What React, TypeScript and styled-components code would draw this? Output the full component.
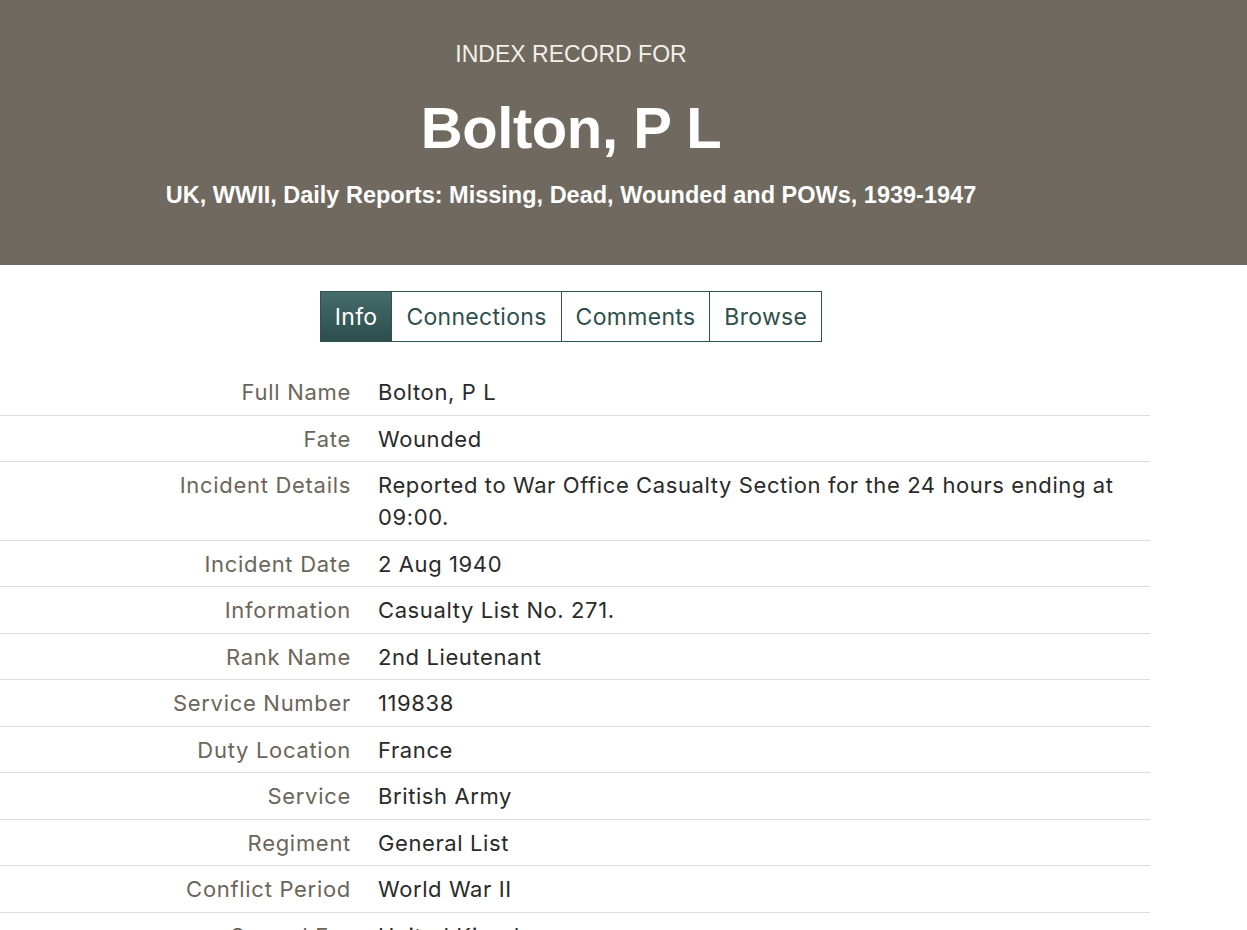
import styled, { createGlobalStyle } from 'styled-components'

const GlobalStyle = createGlobalStyle`
  html, body {
    margin: 0;
    padding: 0;
    background: #fff;
  }
  body {
    font-family: Inter, "Noto Sans", sans-serif;
  }
`

const tabs = ['Info', 'Connections', 'Comments', 'Browse']

const fields: [string, string][] = [
  ['Full Name', 'Bolton, P L'],
  ['Fate', 'Wounded'],
  ['Incident Details', 'Reported to War Office Casualty Section for the 24 hours ending at 09:00.'],
  ['Incident Date', '2 Aug 1940'],
  ['Information', 'Casualty List No. 271.'],
  ['Rank Name', '2nd Lieutenant'],
  ['Service Number', '119838'],
  ['Duty Location', 'France'],
  ['Service', 'British Army'],
  ['Regiment', 'General List'],
  ['Conflict Period', 'World War II'],
  ['Served For', 'United Kingdom']
]

export default function App () {
  return (
    <Page>
      <GlobalStyle />
      <Header>
        <HeaderInner>
          <OverTitle>INDEX RECORD FOR</OverTitle>
          <Title>Bolton, P L</Title>
          <Collection>UK, WWII, Daily Reports: Missing, Dead, Wounded and POWs, 1939-1947</Collection>
        </HeaderInner>
      </Header>
      <Main>
        <TabBar>
          {tabs.map((t, i) => (
            <Tab key={t} active={i === 0}>{t}</Tab>
          ))}
        </TabBar>
        <Table>
          <tbody>
            {fields.map(([label, value]) => (
              <Row key={label}>
                <Label>{label}</Label>
                <Value>{value}</Value>
              </Row>
            ))}
          </tbody>
        </Table>
      </Main>
    </Page>
  )
}

const Page = styled.div`
  width: 1247px;
  height: 930px;
  overflow: hidden;
`

const Header = styled.header`
  background: #6f695f;
  height: 265px;
  color: #fff;
  font-family: "Liberation Sans", Arial, sans-serif;
`

const HeaderInner = styled.div`
  width: 1142px;
  display: flex;
  flex-direction: column;
  align-items: center;
  padding-top: 39px;
  box-sizing: border-box;
`

const OverTitle = styled.div`
  font-size: 23px;
  line-height: 30px;
  color: #f3f0ea;
`

const Title = styled.h1`
  margin: 27px 0 0;
  font-size: 58px;
  font-weight: 700;
  line-height: 64px;
  letter-spacing: -0.4px;
`

const Collection = styled.div`
  margin-top: 20px;
  font-size: 23.5px;
  font-weight: 700;
  line-height: 30px;
`

const Main = styled.main`
  width: 1150px;
`

const TabBar = styled.nav`
  width: 1142px;
  display: flex;
  justify-content: center;
  padding-top: 26px;
`

const Tab = styled.div<{ active?: boolean }>`
  height: 51px;
  box-sizing: border-box;
  padding: 0 14px;
  display: flex;
  align-items: center;
  font-size: 23px;
  letter-spacing: 0.3px;
  border: 1px solid #2f5250;
  margin-left: -1px;
  color: ${p => (p.active ? '#fff' : '#2e4f4d')};
  background: ${p => (p.active ? 'linear-gradient(#466b6b, #2c4f4d)' : '#fff')};

  &:first-child {
    margin-left: 0;
  }
`

const Table = styled.table`
  width: 1150px;
  margin-top: 27px;
  border-collapse: collapse;
  font-size: 22px;
  line-height: 32px;
`

const Row = styled.tr`
  border-bottom: 1px solid #dcdcdc;
`

const Label = styled.th`
  width: 351px;
  padding: 7px 27px 6.5px 0;
  text-align: right;
  vertical-align: top;
  font-weight: 400;
  letter-spacing: 0.7px;
  color: #6c655a;
  white-space: nowrap;
`

const Value = styled.td`
  padding: 7px 30px 6.5px 0;
  vertical-align: top;
  letter-spacing: 0.6px;
  color: #2a2a2a;
`
